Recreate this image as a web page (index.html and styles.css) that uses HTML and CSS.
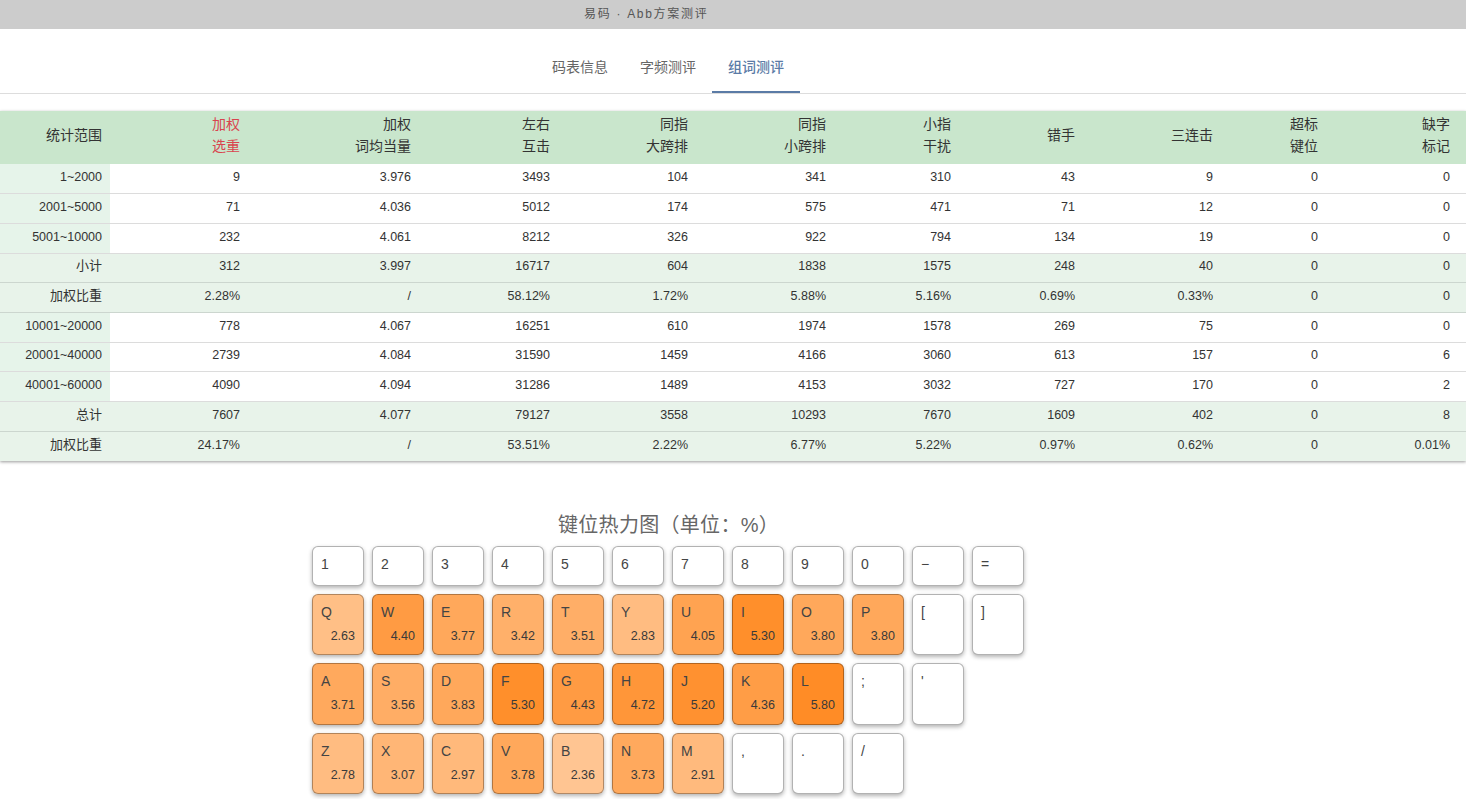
FILE: index.html
```html
<!DOCTYPE html>
<html lang="zh">
<head>
<meta charset="utf-8">
<title>易码 · Abb方案测评</title>
<link rel="stylesheet" href="styles.css">
</head>
<body>
<header class="topbar"><span class="topbar-title">易码 · Abb方案测评</span></header>
<nav class="tabs">
  <a class="tab">码表信息</a>
  <a class="tab">字频测评</a>
  <a class="tab active">组词测评</a>
</nav>
<table class="stats">
  <colgroup>
    <col class="c110"><col class="c138"><col class="c171"><col class="c139"><col class="c138"><col class="c138"><col class="c125"><col class="c124"><col class="c138"><col class="c105"><col class="c140">
  </colgroup>
  <thead>
    <tr><th>统计范围</th><th class="red">加权<br>选重</th><th>加权<br>词均当量</th><th>左右<br>互击</th><th>同指<br>大跨排</th><th>同指<br>小跨排</th><th>小指<br>干扰</th><th>错手</th><th>三连击</th><th>超标<br>键位</th><th>缺字<br>标记</th></tr>
  </thead>
  <tbody>
    <tr><th>1~2000</th><td>9</td><td>3.976</td><td>3493</td><td>104</td><td>341</td><td>310</td><td>43</td><td>9</td><td>0</td><td>0</td></tr>
    <tr><th>2001~5000</th><td>71</td><td>4.036</td><td>5012</td><td>174</td><td>575</td><td>471</td><td>71</td><td>12</td><td>0</td><td>0</td></tr>
    <tr><th>5001~10000</th><td>232</td><td>4.061</td><td>8212</td><td>326</td><td>922</td><td>794</td><td>134</td><td>19</td><td>0</td><td>0</td></tr>
    <tr class="sum"><th>小计</th><td>312</td><td>3.997</td><td>16717</td><td>604</td><td>1838</td><td>1575</td><td>248</td><td>40</td><td>0</td><td>0</td></tr>
    <tr class="sum"><th>加权比重</th><td>2.28%</td><td>/</td><td>58.12%</td><td>1.72%</td><td>5.88%</td><td>5.16%</td><td>0.69%</td><td>0.33%</td><td>0</td><td>0</td></tr>
    <tr><th>10001~20000</th><td>778</td><td>4.067</td><td>16251</td><td>610</td><td>1974</td><td>1578</td><td>269</td><td>75</td><td>0</td><td>0</td></tr>
    <tr><th>20001~40000</th><td>2739</td><td>4.084</td><td>31590</td><td>1459</td><td>4166</td><td>3060</td><td>613</td><td>157</td><td>0</td><td>6</td></tr>
    <tr><th>40001~60000</th><td>4090</td><td>4.094</td><td>31286</td><td>1489</td><td>4153</td><td>3032</td><td>727</td><td>170</td><td>0</td><td>2</td></tr>
    <tr class="sum"><th>总计</th><td>7607</td><td>4.077</td><td>79127</td><td>3558</td><td>10293</td><td>7670</td><td>1609</td><td>402</td><td>0</td><td>8</td></tr>
    <tr class="sum"><th>加权比重</th><td>24.17%</td><td>/</td><td>53.51%</td><td>2.22%</td><td>6.77%</td><td>5.22%</td><td>0.97%</td><td>0.62%</td><td>0</td><td>0.01%</td></tr>
  </tbody>
</table>
<h2 class="heat-title">键位热力图（单位：%）</h2>
<section class="keyboard">
  <div class="row row-num">
    <div class="key"><span class="cap">1</span></div><div class="key"><span class="cap">2</span></div><div class="key"><span class="cap">3</span></div><div class="key"><span class="cap">4</span></div><div class="key"><span class="cap">5</span></div><div class="key"><span class="cap">6</span></div><div class="key"><span class="cap">7</span></div><div class="key"><span class="cap">8</span></div><div class="key"><span class="cap">9</span></div><div class="key"><span class="cap">0</span></div><div class="key"><span class="cap">−</span></div><div class="key"><span class="cap">=</span></div>
  </div>
  <div class="row">
    <div class="key" style="background:rgba(255,127,14,.50)"><span class="cap">Q</span><span class="val">2.63</span></div>
    <div class="key" style="background:rgba(255,127,14,.78)"><span class="cap">W</span><span class="val">4.40</span></div>
    <div class="key" style="background:rgba(255,127,14,.68)"><span class="cap">E</span><span class="val">3.77</span></div>
    <div class="key" style="background:rgba(255,127,14,.62)"><span class="cap">R</span><span class="val">3.42</span></div>
    <div class="key" style="background:rgba(255,127,14,.63)"><span class="cap">T</span><span class="val">3.51</span></div>
    <div class="key" style="background:rgba(255,127,14,.52)"><span class="cap">Y</span><span class="val">2.83</span></div>
    <div class="key" style="background:rgba(255,127,14,.72)"><span class="cap">U</span><span class="val">4.05</span></div>
    <div class="key" style="background:rgba(255,127,14,.88)"><span class="cap">I</span><span class="val">5.30</span></div>
    <div class="key" style="background:rgba(255,127,14,.68)"><span class="cap">O</span><span class="val">3.80</span></div>
    <div class="key" style="background:rgba(255,127,14,.68)"><span class="cap">P</span><span class="val">3.80</span></div>
    <div class="key"><span class="cap">[</span></div>
    <div class="key"><span class="cap">]</span></div>
  </div>
  <div class="row">
    <div class="key" style="background:rgba(255,127,14,.67)"><span class="cap">A</span><span class="val">3.71</span></div>
    <div class="key" style="background:rgba(255,127,14,.64)"><span class="cap">S</span><span class="val">3.56</span></div>
    <div class="key" style="background:rgba(255,127,14,.68)"><span class="cap">D</span><span class="val">3.83</span></div>
    <div class="key" style="background:rgba(255,127,14,.88)"><span class="cap">F</span><span class="val">5.30</span></div>
    <div class="key" style="background:rgba(255,127,14,.78)"><span class="cap">G</span><span class="val">4.43</span></div>
    <div class="key" style="background:rgba(255,127,14,.82)"><span class="cap">H</span><span class="val">4.72</span></div>
    <div class="key" style="background:rgba(255,127,14,.86)"><span class="cap">J</span><span class="val">5.20</span></div>
    <div class="key" style="background:rgba(255,127,14,.77)"><span class="cap">K</span><span class="val">4.36</span></div>
    <div class="key" style="background:rgba(255,127,14,.9)"><span class="cap">L</span><span class="val">5.80</span></div>
    <div class="key"><span class="cap">;</span></div>
    <div class="key"><span class="cap">'</span></div>
  </div>
  <div class="row">
    <div class="key" style="background:rgba(255,127,14,.52)"><span class="cap">Z</span><span class="val">2.78</span></div>
    <div class="key" style="background:rgba(255,127,14,.57)"><span class="cap">X</span><span class="val">3.07</span></div>
    <div class="key" style="background:rgba(255,127,14,.55)"><span class="cap">C</span><span class="val">2.97</span></div>
    <div class="key" style="background:rgba(255,127,14,.68)"><span class="cap">V</span><span class="val">3.78</span></div>
    <div class="key" style="background:rgba(255,127,14,.45)"><span class="cap">B</span><span class="val">2.36</span></div>
    <div class="key" style="background:rgba(255,127,14,.67)"><span class="cap">N</span><span class="val">3.73</span></div>
    <div class="key" style="background:rgba(255,127,14,.54)"><span class="cap">M</span><span class="val">2.91</span></div>
    <div class="key"><span class="cap">,</span></div>
    <div class="key"><span class="cap">.</span></div>
    <div class="key"><span class="cap">/</span></div>
  </div>
</section>
</body>
</html>
```

FILE: styles.css
```css
* { box-sizing: border-box; }
html, body { margin: 0; padding: 0; height: 799px; overflow: hidden; }
body {
  background: #fff;
  color: #333;
  font-family: "Liberation Sans", "Noto Sans CJK SC", sans-serif;
}
.topbar {
  height: 29px;
  background: #cccccc;
  padding-left: 584px;
  line-height: 25px;
}
.topbar-title {
  font-size: 12px;
  letter-spacing: 1.7px;
  color: #555;
}
.tabs {
  display: flex;
  height: 65px;
  padding-left: 536px;
  border-bottom: 1px solid #ddd;
}
.tab {
  width: 88px;
  height: 64px;
  line-height: 76px;
  text-align: center;
  font-size: 14px;
  color: #666;
}
.tab.active {
  color: #5b7ba6;
  font-weight: 500;
  border-bottom: 2px solid #5b7ba6;
}
.stats {
  margin-top: 17px;
  width: 1466px;
  table-layout: fixed;
  border-collapse: collapse;
  font-size: 12.5px;
  box-shadow: 0 1px 3px rgba(0,0,0,.4);
}
.c110 { width: 110px; }
.c138 { width: 138px; }
.c171 { width: 171px; }
.c139 { width: 139px; }
.c125 { width: 125px; }
.c124 { width: 124px; }
.c105 { width: 105px; }
.c140 { width: 140px; }
.stats th, .stats td {
  padding: 0 8px 3px;
  text-align: right;
  font-weight: 400;
  color: #333;
}
.stats th:last-child, .stats td:last-child { padding-right: 16px; }
.stats thead tr { height: 53px; background: #c9e6cc; }
.stats thead th { font-size: 14px; line-height: 22px; padding-bottom: 5px; }
.stats thead th.red { color: #d9444e; }
.stats tbody tr { height: 29.7px; border-bottom: 1px solid #dcdcdc; }
.stats tbody tr:last-child { border-bottom: 0; }
.stats tbody th { background: #e6f4ea; font-size: 12.5px; }
.stats tbody tr.sum { background: #e8f3ea; border-bottom-color: #ccd6cf; }
.stats tbody tr.sum th { background: #e8f3ea; font-size: 13px; line-height: 16px; }
.heat-title {
  margin: 52px 0 0;
  padding-left: 558px;
  height: 24px;
  line-height: 24px;
  font-size: 20px;
  font-weight: 400;
  letter-spacing: .3px;
  color: #666;
}
.keyboard {
  display: flex;
  flex-direction: column;
  gap: 8px;
  padding-left: 312px;
  margin-top: 9px;
}
.row { display: flex; gap: 8px; height: 61.5px; }
.row-num { height: 40px; }
.key {
  position: relative;
  width: 52px;
  background: #fff;
  border: 1px solid rgba(0,0,0,.3);
  border-radius: 6px;
  box-shadow: 0 2px 4px rgba(0,0,0,.3);
  color: #444;
}
.cap {
  position: absolute;
  left: 8px;
  top: 8px;
  font-size: 14px;
  line-height: 18px;
}
.val {
  position: absolute;
  right: 8px;
  top: 33px;
  font-size: 12.5px;
  line-height: 16px;
  color: #3a3a3a;
}
```
